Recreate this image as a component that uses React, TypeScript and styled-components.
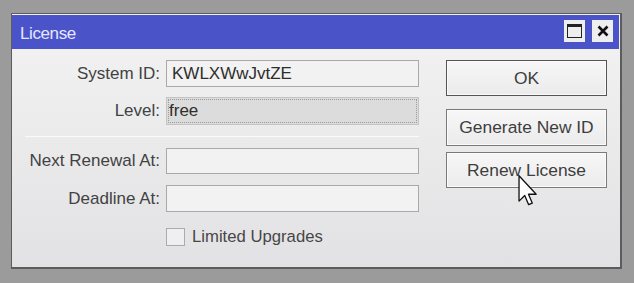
import React from "react";
import styled, { createGlobalStyle } from "styled-components";

const GlobalStyle = createGlobalStyle`
  html, body {
    margin: 0;
    padding: 0;
    background: #9b9b9b;
  }
  * {
    box-sizing: border-box;
  }
`;

const Page = styled.div`
  width: 634px;
  height: 283px;
  padding: 13px 0 0 11px;
  font-family: "Liberation Sans", Arial, sans-serif;
  font-size: 17px;
  overflow: hidden;
`;

const Window = styled.div`
  position: relative;
  width: 611px;
  height: 256px;
  display: flex;
  flex-direction: column;
  border: 1px solid #5c5c5c;
  border-right-width: 2px;
  border-bottom-width: 2px;
  background: linear-gradient(#f3f3f3, #e2e2e4);
`;

const TitleBar = styled.div`
  height: 34px;
  margin: 1px 1px 0 0;
  display: flex;
  align-items: center;
  justify-content: space-between;
  padding: 0 6px 0 8px;
  background: #4b53c9;
  color: #e6e8ff;
  font-size: 17px;
  letter-spacing: -0.4px;
`;

const TitleText = styled.span`
  margin-top: 4px;
`;

const TitleButtons = styled.div`
  display: flex;
  gap: 7px;
  margin-top: -2px;
`;

const TitleButton = styled.div`
  width: 21px;
  height: 22px;
  background: #eeeeee;
  display: flex;
  align-items: center;
  justify-content: center;
`;

const Body = styled.div`
  flex: 1;
  display: flex;
  justify-content: space-between;
  padding: 11px 13px 0 0;
`;

const Form = styled.div`
  width: 407px;
  display: flex;
  flex-direction: column;
`;

const FieldRow = styled.div<{ $h: number; $mt: number }>`
  display: grid;
  grid-template-columns: 148px 253px;
  column-gap: 6px;
  align-items: center;
  height: ${(p) => p.$h}px;
  margin-top: ${(p) => p.$mt}px;
`;

const Label = styled.div`
  text-align: right;
  color: #424242;
  white-space: nowrap;
`;

const Field = styled.div<{ $disabled?: boolean }>`
  height: 100%;
  display: flex;
  align-items: center;
  padding-left: ${(p) => (p.$disabled ? "2px" : "5px")};
  color: #2e2e2e;
  border: 1px solid ${(p) => (p.$disabled ? "#c4c4c4" : "#a9a9a9")};
  background: ${(p) => (p.$disabled ? "#dcdcdc" : "#f2f2f2")};
  outline: ${(p) => (p.$disabled ? "1px dotted #9a9a9a" : "none")};
  outline-offset: -3px;
`;

const Divider = styled.div`
  height: 1px;
  margin: 11px 0 11px 13px;
  background: #c8c8c8;
  border-bottom: 1px solid #fafafa;
`;

const CheckRow = styled.label`
  display: flex;
  align-items: center;
  gap: 7px;
  margin: 15px 0 0 154px;
  color: #474747;
  font-size: 16.7px;
`;

const CheckBox = styled.span`
  width: 19px;
  height: 18px;
  border: 1px solid #ababab;
  background: #efefef;
`;

const Buttons = styled.div`
  width: 161px;
  display: flex;
  flex-direction: column;
`;

const Button = styled.div<{ $h: number; $mt: number; $default?: boolean }>`
  height: ${(p) => p.$h}px;
  margin-top: ${(p) => p.$mt}px;
  display: flex;
  align-items: center;
  justify-content: center;
  color: #3e3e3e;
  font-size: 17.4px;
  background: linear-gradient(#f7f7f7, #ebebeb);
  border: 1px solid ${(p) => (p.$default ? "#555" : "#7a7a7a")};
  box-shadow: inset 0 0 0 1px #fbfbfb;
  white-space: nowrap;
`;

const Cursor = styled.svg`
  position: absolute;
  left: 506px;
  top: 161px;
`;

const App: React.FC = () => {
  return (
    <>
      <GlobalStyle />
      <Page>
        <Window>
          <TitleBar>
            <TitleText>License</TitleText>
            <TitleButtons>
              <TitleButton>
                <svg width="15" height="14" viewBox="0 0 15 14">
                  <rect x="0.5" y="0.5" width="14" height="13" fill="none" stroke="#222" />
                  <rect x="0.5" y="0.5" width="14" height="2.5" fill="#222" />
                </svg>
              </TitleButton>
              <TitleButton>
                <svg width="12" height="12" viewBox="0 0 12 12">
                  <path d="M1.5 1.5 L10.5 10.5 M10.5 1.5 L1.5 10.5" stroke="#111" strokeWidth="2.6" />
                </svg>
              </TitleButton>
            </TitleButtons>
          </TitleBar>
          <Body>
            <Form>
              <FieldRow $h={27} $mt={0}>
                <Label>System ID:</Label>
                <Field>KWLXWwJvtZE</Field>
              </FieldRow>
              <FieldRow $h={28} $mt={10}>
                <Label>Level:</Label>
                <Field $disabled>free</Field>
              </FieldRow>
              <Divider />
              <FieldRow $h={26} $mt={0}>
                <Label>Next Renewal At:</Label>
                <Field />
              </FieldRow>
              <FieldRow $h={27} $mt={11}>
                <Label>Deadline At:</Label>
                <Field />
              </FieldRow>
              <CheckRow>
                <CheckBox />
                Limited Upgrades
              </CheckRow>
            </Form>
            <Buttons>
              <Button $h={36} $mt={0} $default>
                OK
              </Button>
              <Button $h={37} $mt={13}>
                Generate New ID
              </Button>
              <Button $h={36} $mt={6}>
                Renew License
              </Button>
            </Buttons>
          </Body>
          <Cursor width="20" height="31" viewBox="0 0 12 19">
            <path
              d="M0.5 0.5 L0.5 16 L4 12.6 L6.4 18.2 L8.6 17.2 L6.3 11.8 L11 11.8 Z"
              fill="#fff"
              stroke="#111"
              strokeWidth="0.8"
              strokeLinejoin="round"
            />
          </Cursor>
        </Window>
      </Page>
    </>
  );
};

export default App;
